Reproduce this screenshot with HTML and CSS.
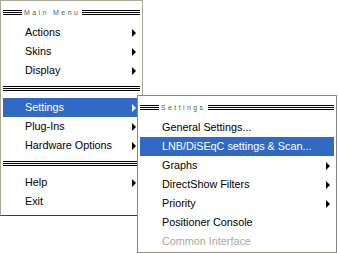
FILE: index.html
```html
<!DOCTYPE html>
<html lang="en">
<head>
  <meta charset="UTF-8">
  <title>Main Menu</title>
  <link rel="stylesheet" href="styles.css">
</head>
<body>

<div class="stage">

  <!-- Main menu -->
  <div class="menu main-menu">
    <div class="menu-title">
      <span class="rule short"></span>
      <span class="label">Main Menu</span>
      <span class="rule"></span>
    </div>
    <div class="item sub">Actions</div>
    <div class="item sub">Skins</div>
    <div class="item sub">Display</div>
    <div class="sep"><span class="rule"></span></div>
    <div class="item sub active">Settings</div>
    <div class="item sub">Plug-Ins</div>
    <div class="item sub">Hardware Options</div>
    <div class="sep"><span class="rule"></span></div>
    <div class="item sub">Help</div>
    <div class="item">Exit</div>
  </div>

  <!-- Settings submenu -->
  <div class="menu sub-menu">
    <div class="menu-title">
      <span class="rule short"></span>
      <span class="label">Settings</span>
      <span class="rule"></span>
    </div>
    <div class="item">General Settings...</div>
    <div class="item active">LNB/DiSEqC settings &amp; Scan...</div>
    <div class="item sub">Graphs</div>
    <div class="item sub">DirectShow Filters</div>
    <div class="item sub">Priority</div>
    <div class="item">Positioner Console</div>
    <div class="item disabled">Common Interface</div>
  </div>

</div>

</body>
</html>
```

FILE: styles.css
```css
body {
  margin: 0;
  background-color: #ffffff;
  font-family: "Liberation Sans", Arial, sans-serif;
  font-size: 10.8px;
  color: #000000;
}

.stage {
  position: relative;
  width: 338px;
  height: 253px;
}

.menu {
  background-color: #ffffff;
  border: 1px solid #aca899;
  box-sizing: border-box;
}

.main-menu {
  width: 143px;
  height: 216px;
  padding: 0 2px;
  border-bottom-color: #404040;
}

.sub-menu {
  position: absolute;
  left: 137px;
  top: 95px;
  width: 200px;
  height: 158px;
  padding: 0 2px;
  border-color: #8c8a82;
}

.menu-title {
  height: 22px;
  display: flex;
  align-items: center;
  gap: 2px;
}

.rule {
  flex: 1;
  height: 5px;
  background: linear-gradient(#000 0 1px, transparent 1px 2px, #000 2px 3px, transparent 3px 4px, #000 4px 5px);
}

.rule.short {
  flex: 0 0 19px;
}

.label {
  font-size: 7px;
  letter-spacing: 2.4px;
  color: #5a5a5a;
}

.item {
  height: 19px;
  line-height: 19px;
  padding-left: 22px;
  position: relative;
}

.item.sub::after {
  content: "";
  position: absolute;
  right: 4px;
  top: 6px;
  border-left: 4px solid #000;
  border-top: 4px solid transparent;
  border-bottom: 4px solid transparent;
}

.item.active {
  background-color: #316ac5;
  color: #ffffff;
}

.item.active.sub::after {
  border-left-color: #ffffff;
}

.item.disabled {
  color: #aca899;
}

.sep {
  height: 18px;
  display: flex;
  align-items: center;
}

.sep .rule {
  margin-top: -1px;
}
```
